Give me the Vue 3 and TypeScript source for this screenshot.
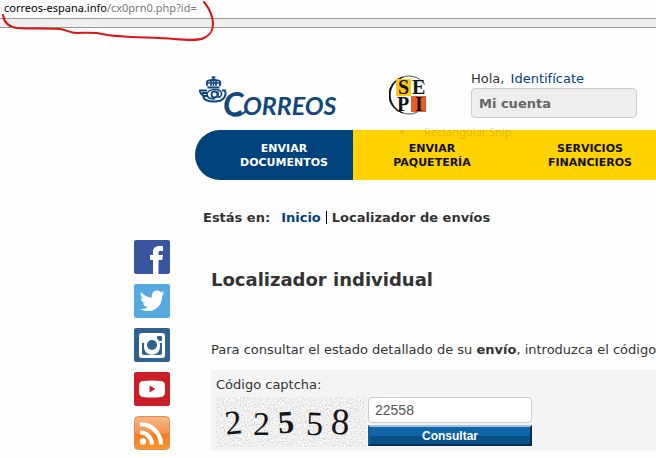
<script setup lang="ts">
import { ref } from 'vue'

interface NavItem {
  first: string
  second: string
  active?: boolean
}

interface Digit {
  char: string
  x: number
  y: number
  angle: number
  font: string
}

const code = ref('22558')

const navItems: NavItem[] = [
  { first: 'ENVIAR', second: 'DOCUMENTOS', active: true },
  { first: 'ENVIAR', second: 'PAQUETERÍA' },
  { first: 'SERVICIOS', second: 'FINANCIEROS' },
]

const digits: Digit[] = [
  { char: '2', x: 9, y: 37, angle: -6, font: 'thin' },
  { char: '2', x: 37, y: 38, angle: 0, font: 'thin' },
  { char: '5', x: 62, y: 36, angle: -4, font: 'thick' },
  { char: '5', x: 90, y: 38, angle: 2, font: 'thin' },
  { char: '8', x: 115, y: 37, angle: 4, font: 'large' },
]
</script>

<template>
  <div class="screen">
    <div class="address"><strong>correos-espana.info</strong>/cx0prn0.php?id=</div>
    <div class="toolbar"></div>

    <div class="page">
      <aside class="social">
        <a href="#" aria-label="Facebook">
          <svg viewBox="0 0 36 34">
            <rect width="36" height="34" rx="2" fill="#3a55a0" />
            <path d="M19 34V20h-3v-5h3v-3c0-4 2.500-6 6.500-6H29v5h-2.500c-1.500 0-2 .6-2 2V15H29l-.8 5h-3.700v14z" fill="#fff" />
          </svg>
        </a>
        <a href="#" aria-label="Twitter">
          <svg viewBox="0 0 36 34">
            <rect width="36" height="34" rx="2" fill="#55a9df" />
            <path d="M7 8c3 3.500 6.500 5.400 11 5.600C17 9 20 6.500 23 6.500c2 0 3 .8 3.800 1.700 1.300-.2 2.100-.7 3.200-1.400-.4 1.400-1.100 2.400-2.100 3 1-.1 1.800-.4 2.600-.8-.7 1.100-1.400 2-2.500 2.800C28.500 20 23 27 14.500 27 11.500 27 8.500 26.600 6 25c3 .3 5.600-.5 7.800-2.100-2.500-.1-4.200-1.700-4.900-3.700.8.2 1.500.1 2.200-.1-2.600-.6-4.300-2.600-4.300-5.200.8.400 1.600.6 2.400.6C6.800 12.800 6 10.300 7 8z" fill="#fff" />
          </svg>
        </a>
        <a href="#" aria-label="Instagram">
          <svg viewBox="0 0 36 34">
            <rect width="36" height="34" rx="2" fill="#2f628e" />
            <rect x="5" y="5" width="26" height="25" rx="3" fill="#fff" />
            <rect x="23" y="8" width="5" height="5" rx="1" fill="#2f628e" />
            <path d="M8 15h3a8 8 0 1 0 14 0h3v10a2 2 0 0 1-2 2H10a2 2 0 0 1-2-2z" fill="#2f628e" />
            <circle cx="18" cy="17" r="8" fill="#fff" />
            <circle cx="18" cy="17" r="5" fill="#2f628e" />
          </svg>
        </a>
        <a href="#" aria-label="YouTube">
          <svg viewBox="0 0 36 34">
            <rect width="36" height="34" rx="2" fill="#cb1f27" />
            <path d="M9 9q9-1 18 0 3.500.3 3.800 4 .4 4 0 8-.3 3.700-3.800 4-9 1-18 0-3.500-.3-3.800-4-.4-4 0-8Q5.500 9.300 9 9z" fill="#fff" />
            <path d="M15.500 13.500v7l6-3.500z" fill="#cb1f27" />
          </svg>
        </a>
        <a href="#" aria-label="RSS">
          <svg viewBox="0 0 36 34">
            <defs>
              <linearGradient id="rss" x1="0" y1="0" x2="0" y2="1">
                <stop offset="0" stop-color="#f7b98c" />
                <stop offset=".5" stop-color="#f3934a" />
                <stop offset=".55" stop-color="#ee7a22" />
                <stop offset="1" stop-color="#f79a33" />
              </linearGradient>
            </defs>
            <rect x=".5" y=".5" width="35" height="33" rx="4" fill="url(#rss)" stroke="#e58a48" />
            <circle cx="9" cy="25.500" r="3.200" fill="#fff" />
            <path d="M6 16.500A12 12 0 0 1 18 28.500M6 8.500A20 20 0 0 1 27 28.500" fill="none" stroke="#fff" stroke-width="4.200" />
          </svg>
        </a>
      </aside>

      <main class="main">
        <header class="header">
          <a class="logo" href="#" aria-label="Correos">
            <svg viewBox="0 0 144 44">
              <g transform="translate(4 0)" fill="none" stroke="#10477d">
                <path d="M8.500 11C6.500 7 8.500 5 11 5.500c1.500-1 5.500-1 7 0 3-.5 4.500 1.500 2.500 5.500" stroke-width="1.800" />
                <path d="M8 8h13M12 5v6M17 5v6M14.500 1v10M12.500 2.500h4" stroke-width="1.600" />
                <path d="M8.500 12.500h12" stroke-width="2" />
                <path d="M0 15.500h8M1 15.500c0 4.500 3 5.500 7 5.500M3 18h5M23 15.500h3c2 6-2 11-10.500 11C8 26.500 4.500 24 4 21" stroke-width="2" />
                <path d="M19 16.500v4.500c0 2 3.500 1.500 3.500-2 0-3-3-4.500-7-4.500S8 16.500 8 19.500s3 4.500 8 4.500" stroke-width="1.600" />
                <circle cx="15.500" cy="19.500" r="3" stroke-width="1.800" />
              </g>
              <text class="logo-initial" x="28" y="41">C</text>
              <text class="logo-name" x="48" y="40">ORREOS</text>
              <path d="M37 40c5 2 10 0 15-5" fill="none" stroke="#10477d" stroke-width="2" />
            </svg>
          </a>
          <svg class="sepi" viewBox="0 0 40 42" role="img" aria-label="SEPI">
            <circle cx="20" cy="20" r="19" fill="none" stroke="#555" stroke-width="1" />
            <path d="M14 2A19 19 0 0 0 14 38 18.500 18.500 0 0 1 14 2z" fill="#111" stroke="#111" stroke-width=".8" />
            <rect x="36" y="4" width="4" height="34" fill="#fefefe" />
            <rect x="7" y="4" width="15" height="17" fill="#fbc80c" />
            <rect x="22" y="21" width="15" height="16" fill="#e75b24" />
            <text x="9" y="19">S</text>
            <text x="23" y="19">E</text>
            <text x="8" y="36">P</text>
            <text x="26" y="36">I</text>
          </svg>
          <div class="account">
            <p>Hola, <a href="#">Identifícate</a></p>
            <button type="button">Mi cuenta</button>
          </div>
        </header>

        <div class="nav-wrap">
          <nav class="nav">
            <a v-for="item in navItems" :key="item.second" href="#" :class="{ active: item.active }">
              {{ item.first }}<br />{{ item.second }}
            </a>
          </nav>
          <div class="ghost"><i></i>Rectangular Snip</div>
        </div>

        <p class="crumbs">
          <span>Estás en:</span>
          <a href="#">Inicio</a>
          <span class="current">Localizador de envíos</span>
        </p>

        <section class="content">
          <h1>Localizador individual</h1>
          <p class="intro">Para consultar el estado detallado de su <b>envío</b>, introduzca el código ca</p>
          <form class="panel" @submit.prevent>
            <label for="captcha">Código captcha:</label>
            <div class="row">
              <svg class="captcha" viewBox="0 0 150 50">
                <filter id="grain" x="0" y="0" width="100%" height="100%">
                  <feTurbulence type="fractalNoise" baseFrequency="0.7" numOctaves="2" seed="4" />
                  <feColorMatrix type="saturate" values="0.4" />
                  <feColorMatrix values="1 0 0 0 .36  0 1 0 0 .36  0 0 1 0 .35  0 0 0 0 1" />
                </filter>
                <rect width="150" height="50" filter="url(#grain)" />
                <text
                  v-for="(d, i) in digits"
                  :key="i"
                  :x="d.x"
                  :y="d.y"
                  :class="d.font"
                  :transform="`rotate(${d.angle} ${d.x + 8} ${d.y - 10})`"
                >{{ d.char }}</text>
              </svg>
              <div class="fields">
                <input id="captcha" v-model="code" type="text" />
                <button type="submit">Consultar</button>
              </div>
            </div>
          </form>
        </section>
      </main>
    </div>

    <svg class="marker" viewBox="0 0 220 44">
      <path d="M3 15c1 7 6 12 14 13 15 1 30 0 43 1 8 1 9 4 17 4 10 0 17-1 25 1 18 4 50 3 72 5 12 1 24 2 30-1 8-4 9-9 9-14 0-8-4-16-9-22" />
    </svg>
  </div>
</template>

<style>
body {
  margin: 0;
  background: #fefefe;
}
</style>

<style scoped>
.screen {
  position: relative;
  overflow: hidden;
  font-family: "DejaVu Sans", Verdana, sans-serif;
  font-size: 13px;
  line-height: 16px;
  color: #333;
}

p,
h1 {
  margin: 0;
}

a {
  color: #00427c;
  text-decoration: none;
}

svg {
  display: block;
}

.address {
  height: 18px;
  padding-left: 4px;
  font-family: "Noto Sans", sans-serif;
  font-size: 11px;
  color: #777;
}

.address strong {
  font-weight: 400;
  color: #000;
}

.toolbar {
  height: 8px;
  background: #efefef;
  border-top: 1px solid #999;
  border-bottom: 1px solid #999;
}

.page {
  display: grid;
  grid-template-columns: 36px minmax(0, 1fr);
  column-gap: 25px;
  padding-left: 134px;
}

.social {
  display: grid;
  gap: 10px;
  align-content: start;
  padding-top: 212px;
}

.social svg {
  width: 36px;
  height: 34px;
}

.header {
  display: flex;
  height: 102px;
}

.logo {
  padding-top: 47px;
}

.logo svg {
  width: 144px;
  height: 44px;
  overflow: visible;
}

.logo text {
  font-family: Lato, sans-serif;
  font-style: italic;
  font-weight: 700;
  fill: #10477d;
}

.logo .logo-initial {
  font-size: 33px;
}

.logo .logo-name {
  font-size: 25px;
}

.sepi {
  width: 40px;
  height: 42px;
  margin: 47px 42px 0 50px;
}

.sepi text {
  font-family: "Liberation Serif", serif;
  font-size: 20px;
  font-weight: 700;
  fill: #111;
}

.account {
  padding-top: 43px;
}

.account a {
  margin-left: 2px;
}

.account button {
  display: block;
  box-sizing: border-box;
  width: 166px;
  height: 30px;
  margin-top: 1px;
  padding: 0 7px;
  border: 1px solid #ccc;
  border-radius: 4px;
  background: #eee;
  color: #666;
  font: bold 13px "DejaVu Sans", sans-serif;
  text-align: left;
}

.nav-wrap {
  position: relative;
}

.nav {
  display: flex;
  height: 50px;
  overflow: hidden;
  border-radius: 25px 0 0 25px;
  background: #ffd200;
}

.nav a {
  flex: none;
  box-sizing: border-box;
  width: 158px;
  padding-top: 12px;
  color: #111;
  font-size: 11px;
  font-weight: 700;
  line-height: 14px;
  text-align: center;
}

.nav .active {
  padding-left: 20px;
  background: #00427c;
  color: #fff;
}

.ghost {
  position: absolute;
  top: -6px;
  left: 205px;
  display: flex;
  align-items: center;
  gap: 20px;
  font-family: "Noto Sans", sans-serif;
  font-size: 11px;
  color: #000;
  opacity: 0.12;
}

.ghost i {
  width: 4px;
  height: 4px;
  background: #555;
}

.crumbs {
  display: flex;
  padding: 30px 0 0 8px;
  font-weight: 700;
}

.crumbs a {
  margin: 0 5px 0 11px;
}

.crumbs .current {
  position: relative;
  padding-left: 6px;
}

.crumbs .current::before {
  position: absolute;
  top: 1px;
  left: 0;
  width: 1px;
  height: 13px;
  background: #000;
  content: "";
}

.content {
  padding: 42px 0 0 16px;
}

h1 {
  font-size: 18px;
  line-height: 24px;
}

.intro {
  margin-top: 50px;
  white-space: nowrap;
}

.panel {
  margin-top: 12px;
  padding: 7px 5px 4px;
  background: #f4f4f4;
}

.panel label {
  display: block;
}

.row {
  display: flex;
  gap: 2px;
  margin-top: 4px;
}

.captcha {
  width: 150px;
  height: 50px;
}

.captcha text {
  font-family: "Liberation Serif", serif;
  font-size: 34px;
  fill: #161616;
}

.captcha .thick {
  font-weight: 700;
  font-size: 32px;
}

.captcha .large {
  font-size: 37px;
}

.fields {
  display: grid;
  gap: 2px;
  width: 164px;
  align-content: start;
}

.fields input {
  box-sizing: border-box;
  width: 100%;
  height: 26px;
  padding: 0 6px;
  border: 1px solid #ccc;
  border-radius: 4px;
  background: #fff;
  color: #555;
  font: 14px "Liberation Sans", sans-serif;
}

.fields button {
  height: 21px;
  padding: 0;
  border: 2px solid;
  border-color: #a5c0da #062d54 #062d54 #1a5c98;
  background: linear-gradient(#0f65a8 50%, #0a5088 50%) padding-box;
  color: #fff;
  font: bold 12px "Liberation Sans", sans-serif;
}

.marker {
  position: absolute;
  top: 0;
  left: 0;
  width: 220px;
  height: 44px;
  fill: none;
  stroke: #dc1414;
  stroke-width: 2;
  stroke-linecap: round;
  pointer-events: none;
}
</style>
